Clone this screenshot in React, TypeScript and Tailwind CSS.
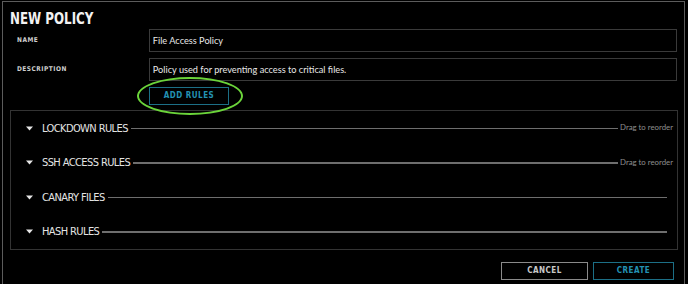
import React from 'react';

const sections = [
  { title: 'LOCKDOWN RULES', drag: true },
  { title: 'SSH ACCESS RULES', drag: true },
  { title: 'CANARY FILES', drag: false },
  { title: 'HASH RULES', drag: false },
];

function Caret() {
  return (
    <svg width="7" height="5" viewBox="0 0 7 5" className="shrink-0">
      <polygon points="0,0.5 7,0.5 3.5,4.5" fill="#e6e6e6" />
    </svg>
  );
}

const cond = "font-['DejaVu_Sans_Condensed','DejaVu_Sans',sans-serif] font-stretch-condensed";

export default function App() {
  return (
    <div className={`relative w-[688px] h-[284px] overflow-hidden bg-black ${cond}`}>
      <div className="ml-[2px] mt-[1px] w-[683px] h-[300px] border border-[#5c5c5c] px-[7px]">
        {/* header */}
        <div className="mt-[7px] h-[19px] flex items-center">
          <h1 className="inline-block origin-left scale-x-[0.8] text-[16.5px] leading-[19px] font-bold text-[#f2f2f2] whitespace-nowrap">
            NEW POLICY
          </h1>
        </div>

        {/* form */}
        <div className="mt-[1px] flex flex-col gap-[6px]">
          <div className="flex items-center">
            <label className="w-[139px] pl-[7px] text-[6.5px] font-bold tracking-[0.5px] text-[#cfcfcf]">NAME</label>
            <div className="w-[529px] h-[23px] border border-[#3a3a3a] flex items-center pl-[3px] text-[9.2px] text-[#e8e8e8] font-['Lato',sans-serif]">
              File Access Policy
            </div>
          </div>
          <div className="flex items-center">
            <label className="w-[139px] pl-[7px] text-[6.5px] font-bold tracking-[0.5px] text-[#cfcfcf]">DESCRIPTION</label>
            <div className="w-[529px] h-[23px] border border-[#3a3a3a] flex items-center pl-[3px] text-[9.2px] text-[#e8e8e8] font-['Lato',sans-serif]">
              Policy used for preventing access to critical files.
            </div>
          </div>
        </div>

        <div className="mt-[6px] pl-[139px] flex">
          <button className="w-[80px] h-[18px] border border-[#1c6f86] text-[8px] leading-none font-bold tracking-[0.5px] text-[#2392b4]">
            ADD RULES
          </button>
        </div>

        {/* rules panel */}
        <div className="mt-[5px] w-[668px] border border-[#333333] flex flex-col">
          {sections.map((s) => (
            <div key={s.title} className="h-[34.5px] flex items-center pl-[15px] pr-[4px]">
              <Caret />
              <span className="ml-[9px] text-[11px] tracking-[-0.6px] text-[#e4e4e4] leading-none whitespace-nowrap">{s.title}</span>
              <div className="flex-1 h-[1.5px] bg-[#6e6e6e] ml-[3px] mr-[2px]" />
              {s.drag ? (
                <span className="text-[7.8px] text-[#8f8f8f] font-['Lato',sans-serif] whitespace-nowrap">Drag to reorder</span>
              ) : (
                <span className="w-[4px]" />
              )}
            </div>
          ))}
        </div>

        {/* footer */}
        <div className="mt-[12px] flex justify-end gap-[5px] pr-[3px]">
          <button className="w-[87px] h-[18px] border border-[#8a8a8a] text-[8px] leading-none font-bold tracking-[0.5px] text-[#c8c8c8]">
            CANCEL
          </button>
          <button className="w-[81px] h-[18px] border border-[#1c6f86] text-[8px] leading-none font-bold tracking-[0.5px] text-[#2392b4]">
            CREATE
          </button>
        </div>
      </div>

      {/* highlight ring */}
      <div className="absolute left-[137px] top-[77px] w-[106px] h-[38px] rounded-[50%] border-2 border-[#6bd43a]" />
    </div>
  );
}
